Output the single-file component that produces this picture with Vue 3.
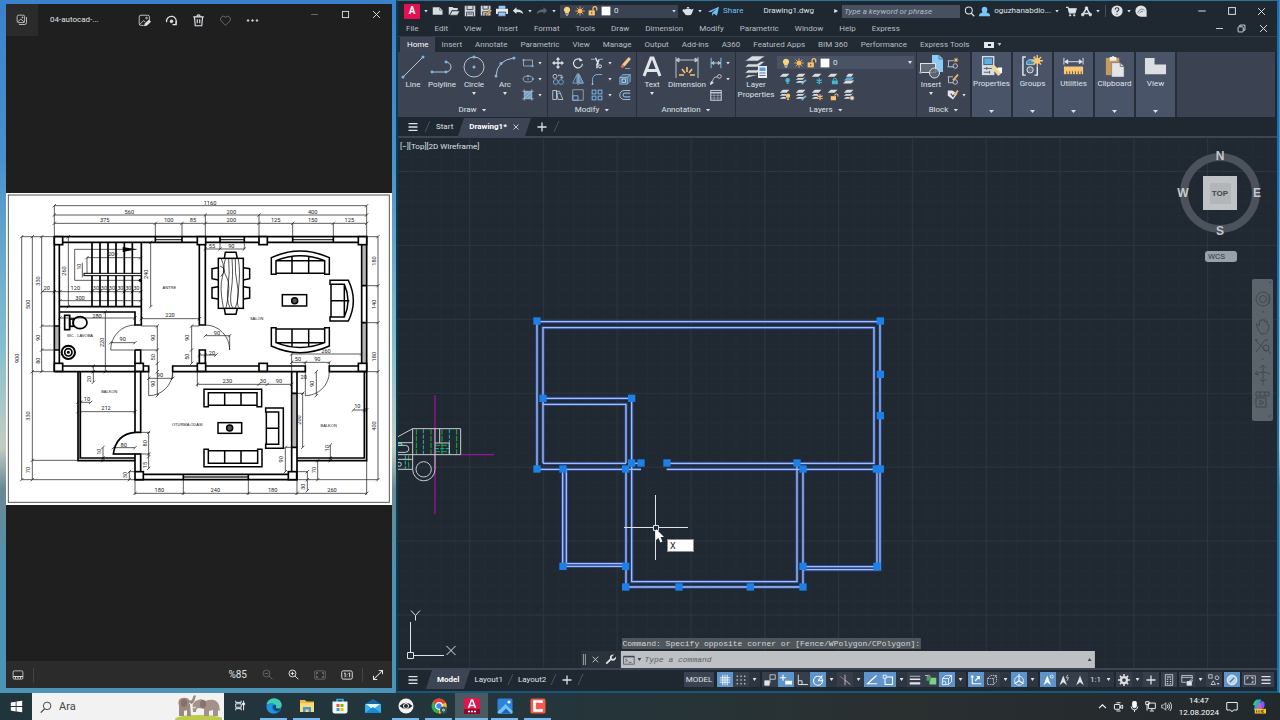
<script setup>
import { h, ref } from 'vue'

const icons = {
  gallery: '<rect x="1.5" y="1.5" width="10" height="10" rx="2"/><path d="M4 14h7.500a2.500 2.500 0 0 0 2.500-2.500V4"/><path d="M2.500 10.500l4-4 4.500 4.500"/><circle cx="8.700" cy="4.500" r=".7"/>',
  editpic: '<path d="M14 8v-4.500a2 2 0 0 0-2-2H3.500a2 2 0 0 0-2 2V12a2 2 0 0 0 2 2H7"/><path d="M2 13l5-5 2 2"/><circle cx="10.500" cy="5" r="1"/><path d="M8 14.500l1-3 4.500-4 2 2-4.500 4.300z" fill="currentColor"/>',
  rotpic: '<path d="M2 10a6 6 0 1 1 11 2" stroke-width="1.500"/><path d="M13.800 8.500v4.500h-4.500" stroke-width="1.500"/><circle cx="8" cy="9" r="1.700" fill="currentColor"/>',
  trash: '<path d="M1.500 3.500h13M3 3.500l1 11h8l1-11M6 3a2 2 0 0 1 4 0M6.500 6.500v5M9.500 6.500v5" stroke-width="1.400"/>',
  heart: '<path d="M8 14L2.500 8.300a3.500 3.500 0 0 1 5.500-4.300 3.500 3.500 0 0 1 5.500 4.300z"/>',
  dots: '<g fill="currentColor"><circle cx="2.500" cy="8" r="1"/><circle cx="8" cy="8" r="1"/><circle cx="13.500" cy="8" r="1"/></g>',
  min: '<path d="M3 8h10" stroke-width="1.300"/>',
  max: '<rect x="3.500" y="3.500" width="9" height="9" stroke-width="1.300"/>',
  restore: '<rect x="3" y="5.500" width="7.500" height="7.500" rx="1" stroke-width="1.300"/><path d="M5.500 5V3h7.500v7.500h-2" stroke-width="1.300"/>',
  close: '<path d="M3 3l10 10M13 3L3 13" stroke-width="1.400"/>',
  film: '<rect x="1.500" y="2.500" width="13" height="11" rx="1.500"/><path d="M1.500 10h13M4.500 10v3M8 10v3M11.500 10v3" stroke-width="1.300"/>',
  zoomout: '<circle cx="6.500" cy="6.500" r="5"/><path d="M10 10l5 5M4 6.500h5" stroke-width="1.200"/>',
  zoomin: '<circle cx="6.500" cy="6.500" r="5" stroke-width="1.400"/><path d="M10 10l5 5M4 6.500h5M6.500 4v5" stroke-width="1.400"/>',
  fit: '<rect x="1" y="2.500" width="14" height="11" rx="1"/><path d="M3.500 7V5h2M12.500 7V5h-2M3.500 9v2h2M12.500 9v2h-2" stroke-width="1.600"/>',
  one: '<rect x="1" y="2.500" width="14" height="11" rx="2" stroke-width="1.300"/><path d="M4 6l1.500-.8V11M10 6l1.500-.8V11M8 6.500v1M8 9v1" stroke-width="1.300"/>',
  full: '<path d="M2 14L14 2M9 2h5v5M7 14H2V9" stroke-width="1.400"/>',
  newf: '<path d="M1 3h9l4 4v6H1z" fill="#d8dbe0" stroke="none"/><path d="M10 3v4h4" stroke="#6d737d"/>',
  open: '<path d="M1 13V2.500h5l1.500 1.500H13v3H5l-3 6z" fill="#d8dbe0" stroke="none"/><path d="M5.500 8H15.500l-3 5.500H2.500z" fill="#d8dbe0" stroke="#1f2730" stroke-width=".6"/>',
  save: '<path d="M1 1h14v14H1z" fill="#d0d4da" stroke="none"/><path d="M4 1v5h8V1M3.500 15V9.500h9V15M5 12h6" stroke="#48505c" stroke-width="1.300"/>',
  saveas: '<path d="M1 1h13v13H1z" fill="#d0d4da" stroke="none"/><path d="M4 1v4.500h7V1M3.500 14V9h8M5 12h4" stroke="#48505c" stroke-width="1.300"/><path d="M7 15l1-3.500 6-6 2 2-6 6z" fill="#f0a94c" stroke="#1f2730" stroke-width=".6"/>',
  print: '<path d="M3.500 1h9v4h-9z" fill="#8fcbff" stroke="none"/><path d="M0 5h16v7H0z" fill="#e6e8eb" stroke="none"/><path d="M3 9.500h10V15H3z" fill="#8fcbff" stroke="#39404a"/>',
  undo: '<path d="M1 7.500L6 3v3q8-.5 9 6-3.500-3-9-2.500V12z" fill="#dde0e4" stroke="none"/>',
  redo: '<path d="M15 7.500L10 3v3q-8-.5-9 6 3.500-3 9-2.500V12z" fill="#5c6470" stroke="none"/>',
  bulb: '<path d="M8 1a5 5 0 0 0-3 9v2h6v-2a5 5 0 0 0-3-9z" fill="#fbd27d" stroke="none"/><path d="M5.500 13.500h5M6.500 15.300h3" stroke="#e1e3e6"/>',
  sun: '<circle cx="8" cy="8" r="4" fill="#fdb958" stroke="none"/><path d="M8 .5v3M8 12.500v3M.5 8h3M12.500 8h3M2.700 2.700l2 2M11.300 11.300l2 2M2.700 13.300l2-2M11.300 4.700l2-2" stroke="#fbc46f" stroke-width="1.300"/>',
  lock: '<path d="M1 7h10v8H1z" fill="#fbc46f" stroke="none"/><path d="M8 7V4a3 3 0 0 1 6 0v3" stroke="#fbc46f" stroke-width="2"/><path d="M6 9.500v3" stroke="#59461f" stroke-width="1.500"/>',
  sq: '<rect x="1" y="1" width="14" height="14" fill="#fff" stroke="none"/>',
  tea: '<path d="M3.500 6q5-3 9 0l3-1-2.500 6.500q-1 2-4 2H7q-3 0-4-3L.5 7.500 1.500 5.500z" fill="#dcdfe3" stroke="none"/><path d="M6.500 3.500h3" stroke="#dcdfe3" stroke-width="1.500"/>',
  plane: '<path d="M0 8L16 1l-3 13-4.500-3L6 14.500V9.700L13 4 4 9.200z" fill="#6cc0f5" stroke="none"/>',
  mag: '<circle cx="7" cy="6.500" r="5" stroke-width="1.500"/><path d="M10.500 10.500L15 15" stroke-width="1.800"/>',
  magl: '<circle cx="9.500" cy="6.500" r="5" stroke-width="1.200"/><path d="M6 10.500L1 15.500" stroke-width="1.400"/>',
  person: '<path d="M0 15v-2q0-2 5-3.500Q3.500 7 4 4q.5-3 4-3t4 3q.5 3-1 5.500 5 1.500 5 3.500v2z" fill="#78c3f7" stroke="none"/>',
  cart: '<path d="M0 2h3l2 8h8l2-6H4" fill="none" stroke-width="1.500"/><path d="M4 4.500h10l-1 5H5z" fill="currentColor"/><circle cx="6" cy="13.500" r="1.200" fill="currentColor"/><circle cx="12" cy="13.500" r="1.200" fill="currentColor"/>',
  adsk: '<path d="M2.500 12.500L8 3l5.500 9.500M5 11h6" stroke-width="2.200"/><g fill="currentColor"><circle cx="8" cy="3" r="2"/><circle cx="2.500" cy="12.500" r="2"/><circle cx="13.500" cy="12.500" r="2"/></g>',
  help: '<circle cx="8" cy="8" r="7.500" fill="#dfe2e6" stroke="none"/><path d="M5.500 6.200q0-2.500 2.500-2.500t2.500 2.200q0 1.500-2.500 2.600v1.300M8 11.500v1.500" stroke="#333b46" stroke-width="1.500"/>',
  assist: '<path d="M8 .5a7.500 7.500 0 0 1 7.500 7.500v7.500H8a7.500 7.500 0 0 1 0-15z" fill="#dfe2e6" stroke="none"/><path d="M3.500 10.500q2-4.500 5-5t4 2M6 11q1.500-3 4.500-2.500" stroke="#59616c"/>',
  line: '<path d="M2 22L22 2" /><g fill="#79b9ea" stroke="none"><circle cx="2" cy="22" r="1.500"/><circle cx="22" cy="2" r="1.500"/></g>',
  pline: '<path d="M2 17h14a5 5 0 0 0 0-10"/><g fill="#79b9ea" stroke="none"><circle cx="2" cy="17" r="1.400"/><circle cx="16" cy="17" r="1.400"/><circle cx="16" cy="7" r="1.400"/></g>',
  circle: '<circle cx="12" cy="12" r="10"/><g fill="#79b9ea" stroke="none"><circle cx="12" cy="2" r="1.500"/><circle cx="12" cy="12" r="1.500"/></g>',
  arc: '<path d="M3 21Q4 5 21 3"/><g fill="#79b9ea" stroke="none"><circle cx="3" cy="21" r="1.500"/><circle cx="8" cy="8.500" r="1.500"/><circle cx="21" cy="3" r="1.500"/></g>',
  rect: '<path d="M2 4h12v8H2z"/><g fill="#79b9ea" stroke="none"><circle cx="2" cy="4" r="1.500"/><circle cx="14" cy="12" r="1.500"/></g>',
  ellipse: '<ellipse cx="8" cy="8" rx="6.500" ry="4"/><g fill="#79b9ea" stroke="none"><circle cx="8" cy="8" r="1"/><circle cx="14.500" cy="8" r="1.400"/><circle cx="8" cy="4" r="1.400"/></g>',
  hatch: '<rect x="3" y="3" width="10" height="10" fill="#6c9fc4" stroke="none"/><path d="M3 .5v15M13 .5v15M.5 3h15M.5 13h15M3 8l5-5M3 13L13 3M8 13l5-5"/>',
  move: '<path d="M8 2v12M2 8h12" stroke-width="1.700"/><path d="M8 0l3 3.500H5zM8 16l3-3.500H5zM0 8l3.500-3v6zM16 8l-3.500-3v6z" fill="currentColor" stroke="none"/>',
  rotate: '<path d="M12.500 4.500A6 6 0 1 0 14 9" stroke-width="1.500"/><path d="M9.500 1l.5 5 4.500-1.500z" fill="currentColor" stroke="none"/>',
  trim: '<path d="M0 3h5M12 3h4" stroke="#79b9ea" stroke-width="1.400"/><path d="M6 1l4 9M11 3L8 10" stroke-width="2"/><circle cx="12" cy="12.500" r="2" stroke-width="1.300"/><path d="M8 9v6" stroke-width="2"/>',
  erase: '<path d="M4 10L13 0l3 2.500-8.500 10z" fill="#f5c789" stroke="none"/><path d="M4 10l3.500 2.500-3 2.500-2.500-2z" fill="#e46a5e" stroke="none"/><path d="M8 15.500h7" stroke="#a9d3f2"/>',
  copy: '<circle cx="4" cy="4.500" r="2.700"/><circle cx="5" cy="12" r="3.200" stroke="#79b9ea"/><circle cx="12" cy="12" r="3.200" stroke="#79b9ea"/><path d="M8 3h5v3.500M11 5l2 2.500L15 5"/>',
  mirror: '<path d="M6.500 2v11.500H1zM9.500 2v11.500H15z" stroke="#79b9ea"/><path d="M9.500 2v11.500H15z" fill="#527da2" stroke="#79b9ea"/><path d="M8 0v16"/>',
  fillet: '<path d="M2 15V9q0-6 6-7h7" stroke="#79b9ea" stroke-width="1.200"/><circle cx="2" cy="15" r=".8"/>',
  explode: '<path d="M1 6l4-4h10v9l-4 4H1z" fill="#4c6d8c" stroke="#79b9ea"/><path d="M1 6h10v9M11 6l4-4" stroke="#a9cbe6"/><rect x="4" y="8" width="4.500" height="4.500"/>',
  stretch: '<path d="M1 2h5v12H1zM6 3l4 0 4.500 11H8z"/><path d="M6 6h5" stroke="#79b9ea"/>',
  scale: '<path d="M1 1h14v14H1z" stroke="#a9b6c4"/><path d="M1 9h7v6H1z" stroke="#79b9ea" stroke-width="1.300"/>',
  array: '<g stroke="#79b9ea" stroke-width="1.300"><rect x="1.500" y="1.500" width="5" height="5"/><rect x="9.500" y="1.500" width="5" height="5"/><rect x="1.500" y="9.500" width="5" height="5"/><rect x="9.500" y="9.500" width="5" height="5"/></g>',
  offset: '<path d="M15 2H7a6 6 0 0 0 0 12h8"/><path d="M15 5.500H8a2.500 2.500 0 0 0 0 5h7" stroke="#79b9ea" stroke-width="1.500"/>',
  text: '<path d="M4 21L11 3h2l7 18M7 15.500h10" stroke="#e2e5e8" stroke-width="3"/>',
  dim: '<path d="M1 2v21M23 2v21"/><path d="M1 5h22M1 5l3-2v4zM23 5l-3-2v4z" fill="currentColor"/><path d="M12 12v5M7 14l3 4M17 14l-3 4M4 20h5M20 20h-5" stroke="#fbc46f" stroke-width="1.600"/>',
  dimlin: '<path d="M1.500 1v14M14.500 1v14" stroke="#79b9ea" stroke-width="1.400"/><path d="M2 8h12M2 8l3-2v4zM14 8l-3-2v4z"/>',
  leader: '<circle cx="12.500" cy="4.500" r="2.500"/><path d="M10 5Q5 4.500 4 9l-2.500 5"/><path d="M.5 15.500l1-4 3 1.500z" fill="currentColor"/>',
  table: '<rect x="1" y="2" width="14" height="13" stroke-width="1.500"/><path d="M1 5h14" stroke-width="2"/><path d="M5.500 5v10M10.500 5v10M1 8.500h14M1 12h14" stroke-width=".7"/>',
  layprop: '<path d="M1 6l7-5h13l-7 5zM1 12l3-3h9l4-2.500 4 0-7 5.500zM1 18l3-3h9l4-2.500h3l-7 5.500zM1 23l3-3h9" fill="#dadde1" stroke="#4a5160" stroke-width=".6"/><rect x="14" y="11" width="9" height="12" fill="#ebedf0" stroke="none"/><rect x="15.500" y="12.500" width="6" height="3.500" fill="#4fa4df" stroke="none"/><path d="M15.500 18h6M15.500 20.500h6" stroke="#6b7280"/>',
  lay1: '<path d="M1 5l4-4h9L10 5z" fill="#dadde1" stroke="none"/><circle cx="11.500" cy="9.500" r="3" fill="#45b8c9" stroke="none"/><path d="M10 13.500h3" stroke="#45b8c9" stroke-width="2"/>',
  lay2: '<path d="M1 5l4-4h9l-4 4zM1 9l3-2.500h7l3-2-4 4.500zM1 13l3-2.500h7l3-2-4 4.500z" fill="#dadde1" stroke="none"/><path d="M9 15l6-6" stroke="#79c3ec" stroke-width="1.500"/>',
  lay3: '<path d="M1 5l4-4h9l-4 4z" fill="#dadde1" stroke="none"/><path d="M11 7v8M7.500 9l7 4M7.500 13l7-4" stroke="#45b8c9" stroke-width="1.800"/>',
  lay4: '<path d="M1 5l4-4h9l-4 4z" fill="#dadde1" stroke="none"/><path d="M6.500 10h8v5h-8z" fill="#45b8c9" stroke="none"/><path d="M8.500 10V8q2-2.500 4 0v2" stroke="#45b8c9" stroke-width="1.300"/>',
  lay5: '<path d="M0 14l4-4h11l-4 4z" fill="#dadde1" stroke="none"/><path d="M1 10l4-4h10l-4 4z" fill="#62a7d8" stroke="none"/><path d="M4 5l3-4h7l-3 4z" fill="#dadde1" stroke="none"/>',
  lay6: '<path d="M1 5l4-4h9l-4 4zM1 9l3-2.500h5l1 2.500zM1 13l3-2.500h5V13z" fill="#dadde1" stroke="none"/><circle cx="12" cy="9" r="3" fill="#fbc46f" stroke="none"/><path d="M10.500 13.500h3" stroke="#fbc46f" stroke-width="2"/>',
  lay7: '<path d="M1 5l4-4h9l-4 4zM1 9l3-2.500h5l1 2.500zM1 13l3-2.500h5V13z" fill="#dadde1" stroke="none"/><path d="M12 7v8M8.500 9l7 4M8.500 13l7-4" stroke="#fbc46f" stroke-width="1.500"/>',
  lay8: '<path d="M1 5l4-4h9l-4 4z" fill="#dadde1" stroke="none"/><path d="M5 9.500h7V15H5z" fill="#fbc46f" stroke="none"/><path d="M10.500 9V7.500q2-2 4 0V10" stroke="#fbc46f" stroke-width="1.300"/>',
  lay9: '<path d="M1 5l4-4h9l-4 4zM1 9l3-2.500h7l3-2-4 4.500zM1 13l3-2.500h7l0 2.500z" fill="#dadde1" stroke="none"/><circle cx="12" cy="12" r="3" fill="#e8dcc0" stroke="#6b5f45"/>',
  insert: '<path d="M13 0h7l4 4v13H13z" fill="#8ccbf7" stroke="none"/><path d="M20 0v4h4" stroke="#4a7ba0"/><rect x="1.500" y="8.500" width="15" height="9" fill="#646a76"/><circle cx="15.500" cy="18" r="5" fill="#646a76" fill-opacity=".8"/><circle cx="1.500" cy="17.500" r="1.200" fill="#79b9ea" stroke="none"/>',
  blk1: '<path d="M1 5h8M2 5v8h7"/><circle cx="11" cy="12" r="3"/><path d="M0 13h8" stroke="#79b9ea"/><path d="M12 1v6M9 4h6M10 2l4 4M14 2l-4 4" stroke="#fbc46f" stroke-width="1.200"/>',
  blk2: '<path d="M1 5h7M2 5v8h6"/><circle cx="11" cy="12" r="3"/><path d="M7 9l7-8 1.500 2-6 7z" fill="#f5b467" stroke="none"/>',
  blk3: '<path d="M1 2h6l7 4-6 8-7-5z" fill="#e2e4e8" stroke="none"/><path d="M5 6l3 4 6-9" stroke="#3d4454" stroke-width="1.600"/><path d="M9 7l5-6 1.500 2-5 6z" fill="#f5b467" stroke="none"/>',
  props: '<rect x="2" y="1" width="13" height="20" fill="#d9dce0" stroke="none"/><rect x="4" y="3" width="9" height="7" fill="#64aedf" stroke="#35607f"/><path d="M4 14h9M4 18h6M7 12.500v3M10 16.500v3" stroke="#555c68"/><path d="M12 13l8 8 3-3-8-7z" fill="#f3d49b" stroke="none"/><path d="M15 17l4-4 4 0v6z" fill="#fff" stroke="none"/><path d="M11 12l3-2 8 9-3 3z" fill="#f3d49b" stroke="none"/>',
  groups: '<path d="M5 2H2v19h3M14 2h1M14 21h3v-9" stroke="#e4e7ea" stroke-width="1.500"/><path d="M6 7l2-2h6v5H6z" fill="#4f8dbb" stroke="#9cd1f5"/><circle cx="9.500" cy="15.500" r="3.300" fill="#6a717e"/><path d="M17 0v12M11 6h12M13 2l8 8M21 2l-8 8" stroke="#fbc46f" stroke-width="1.400"/><circle cx="17" cy="6" r="3" fill="#fbc46f" stroke="none"/>',
  utils: '<path d="M2 3v7M22 3v7M3 7h18M3 7l3-2v4zM21 7l-3-2v4z" fill="currentColor"/><rect x="2" y="12" width="20" height="8" fill="#f8c878" stroke="none"/><path d="M5 20v-3M8 20v-3M11 20v-3M14 20v-3M17 20v-3M20 20v-3" stroke="#6a522a"/>',
  clip: '<path d="M3 3h14v18H3z" fill="#c99a5b" stroke="none"/><path d="M7 2h2a2 2 0 0 1 3 0h2v4H7z" fill="#eceef0" stroke="none"/><path d="M9 8h9l4 4v11H9z" fill="#e3e5e8" stroke="#555d6a" stroke-width=".5"/><path d="M18 8v4h4" stroke="#777"/>',
  viewi: '<path d="M1 3h10v7h12v10H1z" fill="#dcdfe2" stroke="none"/>',
  burger: '<path d="M2 3.500h12M2 8h12M2 12.500h12" stroke-width="1.700"/>',
  plus: '<path d="M8 2v12M2 8h12" stroke-width="1.700"/>',
  wrench: '<path d="M2 14l7-7" stroke-width="2.800"/><path d="M13 1l-3 3v3h3l3-3a4.500 4.500 0 1 1-3-3" fill="currentColor" stroke="none"/>',
  prompt: '<rect x="1" y="3" width="14" height="10.500"/><path d="M1 3.500h14" stroke-width="2"/><path d="M3 6.500l3 2-3 2M7.500 11h4"/>',
  grid: '<path d="M5 1v14M11 1v14M1 5h14M1 11h14M8 1v14M1 8h14" stroke-width="1.100"/>',
  snap: '<g fill="currentColor" stroke="none"><circle cx="3" cy="3" r="1"/><circle cx="8" cy="3" r="1"/><circle cx="13" cy="3" r="1"/><circle cx="3" cy="8" r="1"/><circle cx="8" cy="8" r="1"/><circle cx="13" cy="8" r="1"/><circle cx="3" cy="13" r="1"/><circle cx="8" cy="13" r="1"/><circle cx="13" cy="13" r="1"/></g>',
  infer: '<path d="M1 9h6v6H1z" fill="currentColor"/><path d="M8 1h7v6H8zM8 7v5"/>',
  dyn: '<path d="M4 1v8M0 5h8" stroke-width="1.500"/><path d="M7 9h9v5H7z" fill="currentColor" stroke="none"/>',
  ortho: '<path d="M3 1v13h13M3 9h5v5" stroke-width="1.300"/>',
  polar: '<circle cx="8" cy="9" r="6" stroke-width="1.500"/><path d="M8 9h7M8 9l6-7" stroke-width="1.500"/>',
  iso: '<path d="M8 1v14M8 8l7 6"/><path d="M1 3l7 5" stroke="#d3766c"/>',
  track: '<path d="M14 2L2 13h13" stroke-width="1.500"/>',
  osnap: '<rect x="4" y="4" width="10" height="10" stroke-width="1.400"/><rect x="1.500" y="1.500" width="4" height="4" fill="#5f94cb"/>',
  lw: '<path d="M1 3h14" /><path d="M1 7h14" stroke-width="2"/><path d="M1 12.500h14" stroke-width="3"/>',
  transp: '<rect x="6" y="5" width="9" height="9" fill="#7ad08d" stroke="none"/><path d="M0 2h4v4M5 1l2 4" /><rect x="2" y="3" width="6" height="6" fill="#4f9a62" stroke="none"/>',
  cube: '<path d="M2 6l4-4h8v8l-4 4H2zM2 6h8v8M10 6l4-4"/><circle cx="4" cy="12" r="2.500" fill="#5f94cb"/>',
  ucs: '<path d="M3 2v11h12M3 2L1.500 4.500M3 2l1.500 2.500M7 9l5-5M9 3.500h3.500V7" stroke-width="1.500"/>',
  dcube: '<path d="M2 6l4-4h8v8l-4 4H2zM2 6h8v8M10 6l4-4" stroke-dasharray="2 1"/>',
  gizmo: '<circle cx="8" cy="9" r="6"/><path d="M8 0v9M8 9l-6 4M8 9l6 4" stroke-width="1.400"/>',
  ann: '<path d="M7 2l5 13-5-4-5 4zM4 10h6" fill="currentColor" stroke="none"/><circle cx="13" cy="3.500" r="2"/>',
  ann2: '<path d="M7 2l5 13-5-4-5 4z" fill="currentColor" stroke="none"/><path d="M13 1l-2 4h3l-2 4"/>',
  ann3: '<path d="M8 2l5 13-5-4-5 4z" fill="currentColor" stroke="none"/>',
  gear: '<circle cx="8" cy="8" r="4" stroke-width="3"/><path d="M8 0v3M8 13v3M0 8h3M13 8h3M2.500 2.500l2 2M11.500 11.500l2 2M2.500 13.500l2-2M11.500 4.500l2-2" stroke-width="2"/>',
  calc: '<rect x="3" y="1" width="10" height="14"/><path d="M5 4h6M5 7h2M9 7h2M5 10h2M9 10h2M5 13h2M9 13h2" stroke-width="1.300"/>',
  uilock: '<path d="M7 11H1V2h14v5M1 4.500h14"/><path d="M8 10h6v5H8z" fill="currentColor"/><path d="M12 10V8h3v2"/>',
  iso2: '<rect x="1" y="1" width="4.500" height="4.500"/><path d="M4 14l3-5 3 5z"/><circle cx="12" cy="5" r="2.500"/><path d="M12 13h3" stroke-width="1.500"/>',
  perf: '<circle cx="8" cy="8" r="6.500" fill="#b9d4ef"/><path d="M5 11l6-6" stroke="#44719f" stroke-width="1.500"/>',
  clean: '<rect x="1" y="2.500" width="14" height="11"/><path d="M4 7V5h2M12 9v2h-2M9.500 5H12v2" stroke-width="1.300"/>',
  win: '<path d="M1 3l6-1v5.500H1zM8 1.800L15 1v6.500H8zM1 8.500h6V14l-6-1zM8 8.500h7V15l-7-.8z" fill="#fff" stroke="none"/>',
  taskview: '<path d="M1 1v2.500h8V1M1 15v-2.500h8V15M1 5.500h8v5H1zM12.500 1v14" stroke-width="1.300"/><path d="M11 4.500h3v2.500h-3z" fill="currentColor"/>',
  edge: '<circle cx="8" cy="8" r="7.700" fill="#1474c4" stroke="none"/><path d="M.6 6.500C2-1.500 15-1.500 15.700 7c0 4-5 4-6 2.500C11 7 8 4 .6 6.500z" fill="#43cdb0" stroke="none"/><path d="M6 9c0-2 2-2.500 3.500-2C7 4.500 1 5 .5 9c1 7 8 8 12 4.500-4 1-6.500-1.500-6.500-4.500z" fill="#2193df" stroke="none"/><path d="M7 8.500q1-2 2.700-1.200 1 1 0 2.200 1.500 2 5 1l-2 2.500Q7.500 13.500 7 8.500z" fill="#14496f" stroke="none"/>',
  folder: '<path d="M1 2h5l1.500 1.500H15V14H1z" fill="#f0b940" stroke="none"/><path d="M1 5h14v9H1z" fill="#ffdb74" stroke="none"/><path d="M4 14V9h8v5h-2.500v-2.500h-3V14z" fill="#4298d6" stroke="none"/>',
  store: '<path d="M5 4V1.500h6V4" stroke="#39b1e8" stroke-width="1.500"/><path d="M.5 3.500h15V13a2.500 2.500 0 0 1-2.500 2.500H3A2.500 2.500 0 0 1 .5 13z" fill="#f3f6f8" stroke="none"/><path d="M4.500 6h3v3h-3z" fill="#e8552f" stroke="none"/><path d="M8.500 6h3v3h-3z" fill="#7fba00" stroke="none"/><path d="M4.500 10h3v3h-3z" fill="#2aa4e8" stroke="none"/><path d="M8.500 10h3v3h-3z" fill="#ffb900" stroke="none"/>',
  mail: '<path d="M0 6l8-5 8 5z" fill="#1567a8" stroke="none"/><path d="M0 6h16v9H0z" fill="#36b0ee" stroke="none"/><path d="M1 6h14l-7 5.500z" fill="#e6f4fc" stroke="none"/><path d="M0 15l8-6 8 6z" fill="#1c87d4" stroke="none"/>',
  eye: '<circle cx="8" cy="8" r="7.500" fill="#f4f4f4" stroke="none"/><path d="M1.500 8Q8 1.500 14.500 8 8 14.500 1.500 8z" fill="#262b30" stroke="none"/><circle cx="8" cy="8" r="2.500" fill="#262b30" stroke="#f4f4f4"/>',
  chrome: '<circle cx="8" cy="8" r="7.500" fill="#35a853" stroke="none"/><path d="M8 8L1.500 4.200A7.500 7.500 0 0 1 14.800 5z" fill="#e64235" stroke="none"/><path d="M8 8l6.800-3.500A7.500 7.500 0 0 1 8 15.500z" fill="#fbc116" stroke="none"/><circle cx="8" cy="8" r="3.300" fill="#4386f4" stroke="#fff" stroke-width="1.200"/><circle cx="12.500" cy="12" r="3.500" fill="#36525c" stroke="none"/><circle cx="12.500" cy="12" r="1" stroke="#d6dee1"/>',
  acad: '<path d="M0 0h14l2 2v14H0z" fill="#e0144f" stroke="none"/><path d="M0 11h16v5H0z" fill="#8e0b30" stroke="none"/><path d="M4.500 10L7.500 2h1l3 8M5.800 7.500h4.500" stroke="#fff" stroke-width="1.600"/><path d="M4 13.500h2M7 13.500h2M10 13.500h2" stroke="#fff" stroke-width="1.300"/>',
  photos: '<rect x=".5" y=".5" width="15" height="15" rx="1.500" fill="#2b83dc" stroke="none"/><path d="M.5 14l8-8 7 7v2.500H2q-1.500 0-1.500-1.500z" fill="#6fc3fb" stroke="none"/><path d="M4 15.500l5-5 5 5z" fill="#1763b5" stroke="none"/><circle cx="12" cy="4" r="1.600" fill="#eef7ff" stroke="none"/>',
  cam: '<rect x=".5" y=".5" width="15" height="15" rx="1.500" fill="#f25b48" stroke="none"/><path d="M11.500 5V3.500h-7v9h7V11" stroke="#fff" stroke-width="2.600"/>',
  chev: '<path d="M3 10.500l5-5 5 5" stroke-width="1.500"/>',
  meet: '<rect x="2" y="5" width="8" height="7" rx="1" stroke-width="1.400"/><path d="M10 8l4-2v5l-4-2M5 2.500h6M5 14.500h6" stroke-width="1.300"/>',
  mic: '<rect x="5" y="0" width="6" height="10" rx="3" fill="currentColor"/><path d="M3 8q1 5 5 5t5-5M8 13v3" stroke-width="1.300"/>',
  net: '<path d="M5 3h10v8H5zM10 11v3M7 14.500h6" stroke-width="1.300"/><path d="M1 1h5v4H1zM3 5v9" stroke-width="1.300"/>',
  vol: '<path d="M1 6h2.500L7 2.500v11L3.500 10H1z"/><path d="M9 5.500q2 2.500 0 5M11 3.500q3.500 4.500 0 9M13 1.500q5 6.500 0 13" stroke-width="1.200"/>',
  chat: '<path d="M1 2h14v10H10l-2 2.500L6 12H1z" stroke-width="1.200"/>',
  copilot: '<path d="M3 12L5 2q.5-1.500 2-1.500h4L8.500 9q-.5 2-2.500 2z" fill="#25a8e0" stroke="none"/><path d="M13 4l-2 9q-.5 1.500-2 1.500H5L7.500 6q.5-2 2.500-2z" fill="#d95bb5" stroke="none"/><path d="M2 6l2-4 3-1.500-2 7z" fill="#3cc56f" stroke="none"/><path d="M11 2q4 0 3.500 4l-1 4h-3z" fill="#7b5cf0" stroke="none"/><path d="M4 10.500h12v5H4z" fill="#f7c331" stroke="none"/><path d="M6 12v2.500M8.500 12v2.500M11 12v2.500M13.500 12h-1v2.500h1" stroke="#594100"/>',
}

const Icon = (p) =>
  h('svg', {
    viewBox: `0 0 ${p.box || 16} ${p.box || 16}`,
    width: p.size || 12,
    height: p.size || 12,
    fill: 'none',
    stroke: 'currentColor',
    'stroke-width': 1,
    'aria-hidden': 'true',
    innerHTML: icons[p.name],
  })
Icon.props = ['name', 'size', 'box']

const command = ref('')
const dynamicInput = ref('X')
const keyword = ref('')
const taskSearch = ref('')

const menus = ['File', 'Edit', 'View', 'Insert', 'Format', 'Tools', 'Draw', 'Dimension', 'Modify', 'Parametric', 'Window', 'Help', 'Express']
const tabs = ['Home', 'Insert', 'Annotate', 'Parametric', 'View', 'Manage', 'Output', 'Add-ins', 'A360', 'Featured Apps', 'BIM 360', 'Performance', 'Express Tools']
const fileTools = ['newf', 'open', 'save', 'saveas', 'print']
const drawTools = [
  { name: 'line', label: 'Line', cls: 'w28' },
  { name: 'pline', label: 'Polyline', cls: 'w30' },
  { name: 'circle', label: 'Circle', cls: 'w34', more: true },
  { name: 'arc', label: 'Arc', cls: 'w28', more: true },
]
const modifyTools = ['move', 'rotate', 'trim', '>', 'erase', 'copy', 'mirror', 'fillet', '>', 'explode', 'stretch', 'scale', 'array', '>', 'offset']
const layerTools = [
  ['lay1', 'lay2', 'lay3', 'lay4', 'lay5'],
  ['lay6', 'lay2', 'lay7', 'lay8', 'lay9'],
]
const collapsed = [
  { name: 'props', label: 'Properties' },
  { name: 'groups', label: 'Groups' },
  { name: 'utils', label: 'Utilities' },
  { name: 'clip', label: 'Clipboard' },
  { name: 'viewi', label: 'View' },
]
const status = [
  'grid*', 'snap', '>', '|', 'infer', 'dyn*', 'ortho', 'polar*', '>', 'iso', '>', 'track*', 'osnap*', '>', 'lw', 'transp', 'cube*', '>', '|',
  'ucs*', 'dcube', '>', 'gizmo*', '>', '|', 'ann*', 'ann2', 'ann3', '1:1', '>', '|', 'gear', '>', 'plus', '|', 'calc', '|', 'uilock', '>', 'iso2', '|', 'perf*', '|', 'clean', 'burger',
]
const apps = [
  { name: 'taskview', size: 11 },
  { name: 'edge', run: true },
  { name: 'folder', run: true },
  { name: 'store' },
  { name: 'mail' },
  { name: 'eye', run: true },
  { name: 'chrome', run: true },
  { name: 'acad', run: true, active: true },
  { name: 'photos', run: true },
  { name: 'cam', run: true },
]

const walls =
  'M423 65H1452V809H1221M441 490V83H1434V490H812M423 65V508H735M441 490H690M707 490H735M812 508H1452' +
  'M441 295H707V845H1203V490M441 313H690V490M690 508V861H1221V508M500 508V799H690M511 508V791H690M1221 800H1443V508'
const grips = [
  [423, 63], [1453, 63], [1453, 223], [1453, 347], [441, 295], [707, 295], [423, 507], [501, 507], [689, 507], [707, 489], [735, 489], [813, 489],
  [1203, 489], [1221, 507], [1441, 507], [1453, 507], [501, 799], [689, 799], [1221, 799], [1443, 799], [689, 861], [849, 861], [1063, 861], [1221, 861],
]

// Horizontal dimension chains: [y, stops along x]
const hDims = [
  [47, [163, 1100]], [75, [163, 616, 777, 1100]], [100, [163, 466, 546, 616, 777, 878, 1000, 1100]], [177, [616, 660, 733]],
  [305, [127, 163, 180, 276, 300, 324, 348, 373, 397, 422]], [332, [180, 422]], [384, [180, 405]], [386, [424, 598]], [437, [616, 689]],
  [458, [332, 405]], [492, [875, 1085]], [517, [875, 916, 988]], [565, [446, 518]], [583, [592, 777, 802, 875]], [665, [234, 405]],
  [773, [340, 405]], [910, [405, 550, 745, 891, 1100]], [203, [261, 422]], [637, [234, 242, 272]], [660, [1060, 1093, 1100]], [495, [598, 616, 648]],
]
// Vertical dimension chains: [x, stops along y]
const vDims = [
  [65, [140, 869]], [97, [140, 545, 811, 869]], [125, [140, 408, 480, 545]], [205, [140, 350]], [452, [157, 350]], [316, [366, 545]],
  [472, [408, 480, 520, 545, 617]], [575, [408, 480, 520]], [1134, [140, 287, 398, 545, 869]], [280, [528, 545, 577]], [446, [727, 792, 800, 835]],
  [309, [772, 804, 812]], [388, [845, 869]], [949, [545, 617]], [908, [610, 772]], [856, [772, 845]], [953, [812, 869]], [922, [845, 869, 902]], [991, [765, 804, 812]],
]
const hPath = hDims.map(([y, s]) => `M${s[0]} ${y}H${s[s.length - 1]}` + s.map((x) => `M${x - 5} ${y + 5}l10-10`).join('')).join('')
const vPath = vDims.map(([x, s]) => `M${x} ${s[0]}V${s[s.length - 1]}` + s.map((y) => `M${x - 5} ${y + 5}l10-10`).join('')).join('')
const extensions =
  'M163 47V140M466 100V140M546 100V140M616 75V140M777 75V140M878 100V140M1000 100V140M1100 47V140M65 140H163M125 408H163M125 480H163M97 545H163' +
  'M97 811H235M65 869H405M1100 140H1134M1100 287H1134M1100 398H1134M1100 545H1134M891 869H1134M660 157V177M733 157V177M424 408H472M575 408H598' +
  'M332 480H472M405 869V914M550 869V914M745 869V914M891 869V914M1100 812V914M875 492V545M875 583V610M592 545V590M446 545V617M916 517V617M340 792H450M405 727H450' +
  'M224 178H410M224 178V271H424M247 218V262M261 203V257M875 610H912M875 772H856M405 845H388M891 845H922'
const hLabels = [
  ['1160', 630, 38], ['560', 388, 66], ['200', 694, 66], ['400', 938, 66], ['375', 314, 90], ['100', 506, 90], ['85', 579, 90], ['200', 694, 90],
  ['125', 827, 90], ['150', 938, 90], ['125', 1048, 90], ['55', 636, 168], ['90', 694, 168], ['20', 140, 295], ['120', 226, 294], ['30', 288, 294],
  ['30', 312, 294], ['30', 336, 294], ['30', 361, 294], ['30', 385, 294], ['30', 409, 294], ['300', 240, 323], ['280', 291, 377], ['220', 510, 376],
  ['200', 338, 193], ['90', 368, 446], ['90', 651, 429], ['260', 978, 484], ['50', 894, 507], ['90', 952, 507], ['230', 682, 572], ['30', 789, 572],
  ['90', 837, 572], ['20', 911, 562], ['20', 636, 488], ['90', 480, 554], ['212', 318, 655], ['10', 261, 628], ['80', 371, 764], ['10', 1072, 649],
  ['180', 478, 901], ['240', 646, 901], ['180', 818, 901], ['260', 996, 901],
]
const vLabels = [
  ['900', 52, 505], ['500', 84, 343], ['330', 84, 678], ['70', 84, 840], ['330', 113, 273], ['90', 113, 443], ['80', 113, 512], ['260', 193, 243],
  ['10', 236, 230], ['240', 438, 253], ['220', 305, 457], ['90', 460, 443], ['50', 460, 502], ['90', 562, 443], ['50', 562, 500], ['180', 1121, 213],
  ['140', 1121, 343], ['180', 1121, 500], ['400', 1121, 708], ['20', 268, 567], ['90', 460, 581], ['80', 434, 760], ['15', 434, 825], ['10', 298, 785],
  ['30', 376, 855], ['90', 937, 581], ['200', 898, 690], ['90', 843, 808], ['70', 942, 840], ['30', 909, 890], ['10', 980, 775],
]
const rooms = [['ANTRE', 508, 291], ['SALON', 770, 384], ['WC - LAVOBA', 240, 437], ['BALKON', 328, 603], ['OTURMA ODASI', 562, 703], ['BALKON', 986, 707]]
const planWalls =
  'M163 140H1100V545M163 140V545M188 157H1075M178 163V520M178 350H424M178 520V366H405V405H424V157M598 163V405H616V163M1085 163V520' +
  'M188 528H403M163 545H446V528H430M592 528H518V545H916V528H802M777 528H617M1075 528H988V545H1100M405 480H422V520M405 480V520M598 520V480H616V520' +
  'M234 545V812H405M241 545V804H405M405 545V727H422V545M405 845V792H422V845M430 853H865M405 869H891V545M875 545V845M1100 545V812H891M1093 545V804H891' +
  'M466 140V157M546 140V157M660 140V157M733 140V157M878 140V157M1000 140V157M1085 287H1100M1085 398H1100M550 853V869M745 853V869M875 610H891M875 772H891M163 408H178M163 480H178'
const columns = [[163, 140], [592, 140], [777, 140], [1075, 140], [163, 520], [405, 520], [592, 520], [777, 520], [1075, 520], [405, 845], [865, 845]]
const treads = 'M276 157V350M300 157V350M324 157V350M348 157V350M373 157V350M397 157V350'
</script>

<template>
  <div class="desktop">
    <div class="workspace">
      <section class="photos" aria-label="Photos">
        <header class="photo-bar">
          <button class="app-btn" aria-label="Gallery"><Icon name="gallery" size="12" /></button>
          <span class="photo-name">04-autocad-...</span>
          <div class="photo-tools">
            <button aria-label="Edit"><Icon name="editpic" size="13" /></button>
            <button aria-label="Rotate"><Icon name="rotpic" size="13" /></button>
            <button aria-label="Delete"><Icon name="trash" size="13" /></button>
            <button aria-label="Favourite" class="dim"><Icon name="heart" size="13" /></button>
            <button aria-label="More"><Icon name="dots" size="13" /></button>
          </div>
          <div class="photo-win">
            <button aria-label="Minimize" class="dim"><Icon name="min" size="11" /></button>
            <button aria-label="Maximize"><Icon name="max" size="11" /></button>
            <button aria-label="Close"><Icon name="close" size="11" /></button>
          </div>
        </header>
        <div class="photo-stage">
          <svg class="plan" viewBox="18 9 1158 936" role="img" aria-label="Floor plan">
            <rect x="18" y="9" width="1158" height="936" fill="#fff" />
            <rect x="25" y="15" width="1143" height="922" fill="none" stroke="#555" stroke-width="3" />
            <g fill="none" stroke="#222" stroke-width="2.200">
              <path :d="hPath" /><path :d="vPath" /><path :d="extensions" />
              <path d="M332 480A73 75 0 0 1 405 405M616 405A73 75 0 0 1 689 480V437M446 617A72 72 0 0 0 518 545V565M916 617A72 72 0 0 0 988 545V517" />
              <path d="M466 149H546M660 149H733M878 149H1000M550 861H745" stroke="#333" stroke-width="4" />
            </g>
            <g fill="#b5b5b5">
              <rect x="1087" y="163" width="12" height="124" /><rect x="1087" y="398" width="12" height="122" />
              <rect x="877" y="610" width="12" height="162" /><rect x="235" y="545" width="6" height="262" /><rect x="165" y="408" width="11" height="72" />
            </g>
            <g fill="none" stroke="#000" stroke-width="5">
              <path :d="planWalls" /><path :d="treads" />
              <rect x="252" y="250" width="172" height="7" fill="#fff" stroke-width="3" />
              <path d="M405 727Q348 732 340 792H405" />
              <path d="M368 171L410 178L368 186Z" fill="#000" stroke="none" />
              <circle cx="421" cy="271" r="5" fill="#000" stroke="none" />
              <rect v-for="(c, i) in columns" :key="i" :x="c[0]" :y="c[1]" width="25" height="24" fill="#fff" />
            </g>
            <g fill="none" stroke="#000" stroke-width="5">
              <rect x="194" y="376" width="15" height="43" /><rect x="209" y="387" width="11" height="22" /><ellipse cx="240" cy="398" rx="21" ry="18" />
              <circle cx="205" cy="487" r="20" stroke-width="6" /><circle cx="205" cy="487" r="11" /><circle cx="205" cy="487" r="2" />
            </g>
            <g transform="translate(588 0)" fill="none" stroke="#000" stroke-width="4.500">
              <rect x="67" y="205" width="75" height="150" />
              <path d="M85 205L88 187H120L124 205M85 355L88 373H120L124 355M67 233L48 236V266L67 270M67 290L48 293V324L67 327M142 233L161 236V266L142 270M142 290L161 293V324L142 327" />
              <path d="M76 207Q88 232 79 262T82 353M88 207Q78 240 92 262T90 353M98 207Q102 250 96 290T102 353M108 207Q112 260 106 300T110 353M118 207Q116 250 124 285T118 353M127 207Q134 250 127 300T130 353M72 228Q96 236 74 260" stroke-width="2" />
              <path d="M226 253V203Q312 163 400 203V253H386V212Q312 183 240 212V253ZM240 212H386M240 250H386M288 197V250M338 197V250" />
              <path d="M402 271H457Q487 332 457 393H402V381H445Q467 332 445 283H402ZM405 283V381M445 283V381M405 332H460" />
              <path d="M226 413V468Q312 508 400 468V413H386V458Q312 487 240 458V413ZM240 417H386M240 458H386M288 417V472M338 417V472" />
              <rect x="259" y="314" width="73" height="34" /><circle cx="296" cy="332" r="9" fill="#555" />
            </g>
            <g transform="translate(588 465)" fill="none" stroke="#000" stroke-width="4.500">
              <path d="M24 133H197V185H183V143H37V185H24ZM37 181H183M86 143V181M135 143V181" />
              <path d="M24 313V365H198V313H185V355H37V313ZM37 317H185M86 317V355M135 317V355" />
              <path d="M209 189H262V310H209V298H248V201H209ZM211 201V298M211 250H248" />
              <rect x="66" y="233" width="71" height="32" /><circle cx="101" cy="249" r="9" fill="#555" />
            </g>
            <g class="plan-num">
              <text v-for="(t, i) in hLabels" :key="'h' + i" :x="t[1]" :y="t[2] + 6">{{ t[0] }}</text>
              <text v-for="(t, i) in vLabels" :key="'v' + i" :transform="`translate(${t[1] + 6} ${t[2]}) rotate(-90)`">{{ t[0] }}</text>
            </g>
            <g class="plan-room">
              <text v-for="(t, i) in rooms" :key="i" :x="t[1]" :y="t[2] + 5">{{ t[0] }}</text>
            </g>
          </svg>
        </div>
        <footer class="photo-foot">
          <button aria-label="Filmstrip"><Icon name="film" /></button>
          <i class="vline"></i>
          <span class="zoom-pct">%85</span>
          <button aria-label="Zoom out" class="dim"><Icon name="zoomout" size="11" /></button>
          <button aria-label="Zoom in"><Icon name="zoomin" size="11" /></button>
          <button aria-label="Fit" class="dim"><Icon name="fit" /></button>
          <button aria-label="Actual size"><Icon name="one" /></button>
          <i class="vline"></i>
          <button aria-label="Full screen"><Icon name="full" /></button>
        </footer>
      </section>

      <section class="cad" aria-label="AutoCAD">
        <header class="title-bar">
          <button class="logo" aria-label="Application menu">A</button><i class="arr"></i>
          <button v-for="t in fileTools" :key="t" :aria-label="t"><Icon :name="t" /></button>
          <button aria-label="Undo"><Icon name="undo" /></button><i class="arr"></i>
          <button aria-label="Redo"><Icon name="redo" /></button><i class="arr"></i>
          <button class="layer-box quick" aria-label="Layer"><Icon name="bulb" size="10" /><Icon name="sun" size="10" /><Icon name="lock" size="10" /><Icon name="sq" size="10" /><span>0</span><i class="arr end"></i></button>
          <button aria-label="Render"><Icon name="tea" /></button><i class="arr"></i>
          <a class="share" href="#"><Icon name="plane" size="11" />Share</a>
          <h1 class="doc-name">Drawing1.dwg</h1>
          <i class="arr side"></i>
          <input v-model="keyword" class="keyword" type="text" aria-label="Search help" placeholder="Type a keyword or phrase" />
          <button aria-label="Search"><Icon name="mag" size="11" /></button>
          <button class="user"><Icon name="person" size="11" />oguzhanabdio...</button><i class="arr"></i>
          <button class="cart" aria-label="Store"><Icon name="cart" size="11" /></button>
          <button aria-label="Autodesk apps"><Icon name="adsk" size="11" /></button><i class="arr"></i>
          <i class="vline"></i>
          <button aria-label="Help"><Icon name="help" /></button><i class="arr"></i>
          <button aria-label="Assistant"><Icon name="assist" /></button>
          <div class="win-ctl">
            <button aria-label="Minimize"><Icon name="min" /></button>
            <button aria-label="Maximize"><Icon name="max" /></button>
            <button aria-label="Close"><Icon name="close" size="11" /></button>
          </div>
        </header>

        <nav class="menu-bar">
          <button v-for="m in menus" :key="m">{{ m }}</button>
          <div class="doc-ctl">
            <button aria-label="Minimize drawing"><Icon name="min" size="11" /></button>
            <button aria-label="Restore drawing"><Icon name="restore" size="11" /></button>
            <button aria-label="Close drawing"><Icon name="close" size="11" /></button>
          </div>
        </nav>

        <nav class="tab-bar">
          <button v-for="(t, i) in tabs" :key="t" :class="{ on: i === 0 }">{{ t }}</button>
          <button class="ribbon-toggle" aria-label="Ribbon display"><i></i></button><i class="arr"></i>
        </nav>

        <div class="ribbon">
          <section class="panel draw">
            <div class="tools">
              <button v-for="t in drawTools" :key="t.name" class="big" :class="t.cls"><Icon class="soft" :name="t.name" size="24" box="24" /><span>{{ t.label }}</span><i v-if="t.more" class="arr"></i></button>
              <div class="small-grid pair">
                <template v-for="n in ['rect', 'ellipse', 'hatch']" :key="n"><button :aria-label="n"><Icon class="soft" :name="n" size="12" /></button><i class="arr"></i></template>
              </div>
            </div>
            <button class="panel-name">Draw<i class="arr"></i></button>
          </section>
          <section class="panel modify">
            <div class="tools">
              <div class="small-grid five">
                <template v-for="(n, i) in modifyTools" :key="i"><i v-if="n === '>'" class="arr"></i><button v-else :aria-label="n"><Icon :name="n" /></button></template>
              </div>
            </div>
            <button class="panel-name">Modify<i class="arr"></i></button>
          </section>
          <section class="panel annotation">
            <div class="tools">
              <button class="big w30"><Icon name="text" size="24" box="24" /><span>Text</span><i class="arr"></i></button>
              <button class="big w40"><Icon class="soft" name="dim" size="24" box="24" /><span>Dimension</span></button>
              <div class="small-grid pair">
                <button aria-label="Linear"><Icon name="dimlin" size="12" /></button><i class="arr"></i>
                <button aria-label="Leader"><Icon name="leader" size="12" /></button><i class="arr"></i>
                <button aria-label="Table"><Icon class="soft" name="table" size="12" /></button>
              </div>
            </div>
            <button class="panel-name">Annotation<i class="arr"></i></button>
          </section>
          <section class="panel layers">
            <div class="tools">
              <button class="big w40"><Icon name="layprop" size="24" box="24" /><span>Layer<br />Properties</span></button>
              <div class="layer-side">
                <button class="layer-box" aria-label="Current layer"><Icon name="bulb" size="10" /><Icon name="sun" size="10" /><Icon name="lock" size="10" /><Icon name="sq" size="10" /><span>0</span><i class="arr end"></i></button>
                <div v-for="(row, r) in layerTools" :key="r" class="layer-row"><button v-for="n in row" :key="n" :aria-label="n"><Icon :name="n" size="12" /></button></div>
              </div>
            </div>
            <button class="panel-name">Layers<i class="arr"></i></button>
          </section>
          <section class="panel block">
            <div class="tools">
              <button class="big w28"><Icon name="insert" size="24" box="24" /><span>Insert</span><i class="arr"></i></button>
              <div class="small-grid pair tight">
                <button aria-label="Create"><Icon name="blk1" size="12" /></button><i></i>
                <button aria-label="Edit block"><Icon name="blk2" size="12" /></button><i></i>
                <button aria-label="Attributes"><Icon name="blk3" size="12" /></button><i class="arr"></i>
              </div>
            </div>
            <button class="panel-name">Block<i class="arr"></i></button>
          </section>
          <button v-for="c in collapsed" :key="c.name" class="folded"><Icon :name="c.name" size="23" box="24" /><span>{{ c.label }}</span><i class="arr"></i></button>
        </div>

        <nav class="doc-tabs">
          <button aria-label="Files" class="burger"><Icon name="burger" /></button>
          <i class="slash"></i>
          <button class="plain">Start</button>
          <button class="slant">Drawing1*<Icon name="close" size="8" /></button>
          <button aria-label="New drawing" class="add"><Icon name="plus" /></button>
          <i class="slash"></i>
        </nav>

        <main class="canvas">
          <svg class="model" width="100%" height="100%" aria-label="Model space">
            <defs>
              <pattern id="minor" x="-2" y="33" width="14.760" height="14.800" patternUnits="userSpaceOnUse"><path d="M.5 0V15M0 .5H15" stroke="#232c36" fill="none" /></pattern>
              <pattern id="major" x="71" y="33" width="73.800" height="73.900" patternUnits="userSpaceOnUse"><path d="M.5 0V74M0 .5H74" stroke="#2b343f" fill="none" /></pattern>
            </defs>
            <rect width="100%" height="100%" fill="url(#minor)" />
            <rect width="100%" height="100%" fill="url(#major)" />
            <g transform="translate(-2 162) scale(.33333)" fill="none">
              <path d="M117 286V642M194 464H294" stroke="#95159a" stroke-width="4" />
              <path d="M61 388V462M105 388V462M138 388V462M182 388V462M117 436H160M117 455H160M38 466V508" stroke="#17b436" stroke-width="3" stroke-dasharray="16 4" />
              <path d="M82 388V462M160 388V462M117 446H160M28 466V508" stroke="#1fb3bd" stroke-width="3" stroke-dasharray="12 4" />
              <path d="M4 430H17V436H4Z" stroke="#1fd08d" stroke-width="4" />
              <path d="M4 411L50 386H194V464H4M50 386V508A33 34 0 0 0 117 508V386M131 386V429M117 429H160V464M4 428H50M4 436H28A10 10 0 0 1 28 457H4M4 478H50M4 508H50" stroke="#c9ccd2" stroke-width="3" />
              <circle cx="83" cy="508" r="23" stroke="#c9ccd2" stroke-width="3" /><circle cx="10" cy="493" r="6" stroke="#c9ccd2" stroke-width="3" />
              <path :d="walls" stroke="#26488f" stroke-width="10" /><path :d="walls" stroke="#a9bdf2" stroke-width="4" />
              <rect v-for="(g, i) in grips" :key="i" :x="g[0] - 11" :y="g[1] - 11" width="22" height="22" fill="#1b80e8" />
            </g>
            <g fill="none" stroke="#dfe3e8">
              <path d="M226 389.500H255M261 389.500H290M257.500 357V387M257.500 393V422M255.500 387.500h5v5h-5z" />
              <path d="M258 391v11l2.500-2 2 4.500 2-1-2-4.500h3.500z" fill="#fff" stroke="none" />
              <path d="M12.500 484V515M15 517.500H46M9.500 514.500h6v6h-6zM13 472.500l4.500 5 4.500-5M17.500 477.500v5M48.500 508l9 9M57.500 508l-9 9" />
            </g>
          </svg>
          <span class="vp-label">[−][Top][2D Wireframe]</span>
          <input v-model="dynamicInput" class="dynamic" type="text" aria-label="Dynamic input" />
          <svg class="compass" viewBox="0 0 90 90" aria-label="View cube">
            <circle cx="45" cy="45" r="36" fill="none" stroke="#4b525b" stroke-width="8" />
            <rect x="28" y="28" width="34" height="34" fill="#bfc3c5" /><rect x="35" y="35" width="21" height="21" fill="#b2b6b8" />
            <g class="compass-dir"><text x="45" y="12">N</text><text x="45" y="87">S</text><text x="8" y="49">W</text><text x="82" y="49">E</text></g>
            <text class="compass-top" x="45" y="48">TOP</text>
          </svg>
          <button class="wcs">WCS</button>
          <div class="navbar">
            <svg viewBox="0 0 21 142" width="21" height="142" fill="none" stroke="#3f474f" aria-hidden="true">
              <circle cx="11" cy="20" r="7" /><circle cx="11" cy="20" r="3.500" /><path d="M17 15v10" />
              <path d="M6 50l-2-5q2-1 3 2l1-6q2-1 2 1l2-2 1 3 2-1v3l2 1q0 8-5 9H9z" />
              <path d="M3 61l12 12M13 61L4 73M3 61h3M13 61h3" /><circle cx="14" cy="69" r="3" /><path d="M16 71l3 4" />
              <path d="M4 95q7-4 14 0M11 86v17M8 89l3-3 3 3M8 100l3 3 3-3M5 92l-2 3 4 1" />
              <path d="M4 113h13v4H4zM8 113v4M13 113v4M4 119h10v9H4zM8 121v5l4-2.500z" /><path d="M10 33h2M10 80h2M10 105h2M17 4l2-1M17 138l2-2" />
            </svg>
          </div>
          <div class="command">
            <output class="history">Command: Specify opposite corner or [Fence/WPolygon/CPolygon]:</output>
            <div class="command-row">
              <i class="grab"></i>
              <button aria-label="Close command line"><Icon name="close" size="9" /></button>
              <button aria-label="Customize"><Icon name="wrench" size="11" /></button>
              <label class="command-box"><Icon name="prompt" /><i class="arr"></i><input v-model="command" type="text" aria-label="Command" placeholder="Type a command" /><i class="arr up"></i></label>
            </div>
          </div>
        </main>

        <footer class="status">
          <button aria-label="Layouts" class="burger"><Icon name="burger" /></button>
          <button class="slant">Model</button>
          <button class="plain">Layout1</button>
          <i class="slash"></i>
          <button class="plain">Layout2</button>
          <i class="slash"></i>
          <button aria-label="New layout" class="add"><Icon name="plus" /></button>
          <i class="slash"></i>
          <div class="toggles">
            <button class="space">MODEL</button>
            <template v-for="(s, i) in status" :key="i">
              <i v-if="s === '|'" class="gap"></i>
              <span v-else-if="s === '>'" class="drop"><i class="arr"></i></span>
              <button v-else-if="s === '1:1'" class="ratio">1:1</button>
              <button v-else class="tog" :class="{ on: s.endsWith('*') }" :aria-label="s"><Icon :name="s.replace('*', '')" /></button>
            </template>
          </div>
        </footer>
      </section>
    </div>

    <footer class="taskbar">
      <button class="start" aria-label="Start"><Icon name="win" size="13" /></button>
      <label class="search">
        <Icon name="magl" size="12" /><input v-model="taskSearch" type="text" placeholder="Ara" aria-label="Ara" />
        <svg class="elephants" viewBox="0 0 48 26" width="48" height="26" aria-hidden="true">
          <ellipse cx="25" cy="25" rx="24" ry="4" fill="#bccb4b" />
          <path d="M5 22V12Q3 5 8 4Q14 3 15 6Q18 8 19 3Q20 0 22 2Q21 4 21 5Q20 10 16 10L17 22H13V16L10 17V22Z" fill="#9b8981" />
          <path d="M19 18Q17 7 24 6Q28 4 31 7Q42 3 45 11L46 17 44 16V22H39V16L35 17V22H30V15L25 14Q22 14 22 18Z" fill="#a3928b" />
          <ellipse cx="10" cy="9" rx="3" ry="4" fill="#83726b" /><ellipse cx="29" cy="10" rx="3" ry="4" fill="#85746d" />
          <path d="M22 13Q20 15 18 13M15 9L18 11" stroke="#f5ecd9" fill="none" />
        </svg>
      </label>
      <button v-for="a in apps" :key="a.name" class="app" :class="{ run: a.run, active: a.active }" :aria-label="a.name"><Icon :name="a.name" :size="a.size || 16" /></button>
      <div class="tray">
        <button v-for="n in ['chev', 'meet', 'mic', 'net', 'vol']" :key="n" :aria-label="n"><Icon :name="n" size="11" /></button>
        <time class="clock">14:47<br />12.08.2024</time>
        <button aria-label="Notifications" class="chat"><Icon name="chat" /></button>
        <button aria-label="Copilot" class="copilot"><Icon name="copilot" size="15" /></button>
      </div>
    </footer>
  </div>
</template>

<style>
body { margin: 0; }
</style>

<style scoped>
.desktop {
  height: 100vh; display: flex; flex-direction: column; overflow: hidden;
  font: 8px/12px Roboto, "Open Sans", sans-serif; color: #dfe3e7;
  background: linear-gradient(180deg, #3b82cc 0%, #4a90cc 22%, #84bfd0 48%, #c5cdc2 62%, #6a8894 68%, #4f93b3 80%, #4b93b6 100%);
}
.desktop * { box-sizing: border-box; }
button { font: inherit; color: inherit; background: none; border: 0; padding: 0; margin: 0; display: flex; align-items: center; justify-content: center; flex: none; white-space: nowrap; }
input { font: inherit; color: inherit; border: 0; padding: 0; margin: 0; background: none; outline: 0; min-width: 0; }
svg { display: block; flex: none; }
.arr { flex: none; width: 4px; height: 3px; background: currentColor; clip-path: polygon(0 0, 100% 0, 50% 100%); }
.arr.up { clip-path: polygon(0 100%, 100% 100%, 50% 0); }
.arr.side { clip-path: polygon(0 0, 100% 50%, 0 100%); height: 4px; }
.arr.end { margin-left: auto; }
.dim { color: #777; }
.soft { color: #b9c4d2; }
.vline { width: 1px; height: 14px; background: #454545; flex: none; }
.slash { width: 1px; height: 11px; align-self: center; flex: none; background: #4a525e; transform: skewX(-24deg); }

.workspace { flex: 1; min-height: 0; display: grid; grid-template-columns: minmax(0, 396fr) minmax(0, 884fr); }

.photos { margin: 4px 4px 5px 6px; background: #1f1f1f; display: flex; flex-direction: column; min-width: 0; }
.photo-bar { display: flex; height: 32px; align-items: center; flex: none; }
.app-btn { width: 32px; height: 32px; background: #2b2b2b; }
.photo-name { margin-left: 12px; width: 88px; }
.photo-tools { display: flex; gap: 14px; }
.photo-win { display: flex; gap: 20px; margin-left: auto; margin-right: 10px; margin-bottom: 11px; }
.photo-stage { flex: 1; min-height: 0; display: flex; align-items: center; }
.plan { width: 100%; max-height: 100%; }
.plan-num text { font: 17px Roboto, sans-serif; text-anchor: middle; fill: #222; }
.plan-room text { font: 12px "Liberation Sans", sans-serif; text-anchor: middle; fill: #111; }
.photo-foot { display: flex; align-items: center; height: 27px; flex: none; background: #2b2b2b; padding: 0 8px 0 6px; gap: 15px; }
.photo-foot .vline { margin: 0 -6px; }
.zoom-pct { margin-left: auto; font-size: 10px; }

.cad { margin-right: 1px; border: solid #1c6fa8; border-width: 1px 2px 2px; border-left-color: #0d3d52; border-top-color: #2b7295; border-bottom-color: #15587a; background: #1f2730; display: flex; flex-direction: column; min-width: 0; }
.title-bar { height: 20px; flex: none; display: flex; align-items: center; gap: 4px; padding: 0 10px 0 6px; }
.logo { width: 16px; height: 15px; background: #e51050; color: #fff; font-weight: 700; font-size: 10px; border-radius: 1px; }
.layer-box { height: 13px; background: #3a4352; gap: 3px; padding: 0 2px; justify-content: flex-start; }
.quick { width: 118px; }
.share { display: flex; align-items: center; gap: 4px; color: #6cc0f5; text-decoration: none; margin-left: 2px; }
.doc-name { flex: 1; margin: 0; text-align: center; font-size: 8px; font-weight: 400; white-space: nowrap; }
.keyword { width: 118px; height: 13px; background: #475060; padding-left: 2px; }
.keyword::placeholder { color: #b5bbc4; font-style: italic; opacity: 1; }
.user { gap: 4px; }
.cart { margin-left: 3px; }
.title-bar .vline { background: #48505b; height: 12px; margin: 0 1px; }
.win-ctl { display: flex; gap: 18px; margin-left: 45px; }
.menu-bar { height: 16px; flex: none; display: flex; align-items: center; gap: 16px; padding: 0 8px; color: #b8bec6; border-bottom: 1px solid #333c48; }
.doc-ctl { display: flex; gap: 11px; margin-left: auto; color: #dfe3e7; }
.tab-bar { height: 15px; flex: none; display: flex; align-items: stretch; gap: 13px; padding-left: 2px; color: #b8bec6; background: #222a34; }
.tab-bar .on { background: #3d4454; color: #fff; padding: 0 6px 0 7px; margin-right: -6px; }
.tab-bar .arr { align-self: center; margin-left: -10px; }
.ribbon-toggle { margin-left: 2px; }
.ribbon-toggle i { width: 10px; height: 6px; background: linear-gradient(#222a34, #222a34) center / 3px 2px no-repeat, #e3e6ea; }

.ribbon { height: 65px; flex: none; display: flex; background: #3b4252; margin-right: 2px; }
.panel { display: flex; flex-direction: column; border-right: 1px solid #282f3b; padding-top: 3px; flex: none; background: #3c4353; }
.tools { display: flex; flex: 1; align-items: flex-start; }
.draw { width: 150px; }
.draw .tools { padding-left: 1px; }
.modify { width: 89px; }
.annotation { width: 99px; }
.layers { width: 181px; }
.block { width: 55px; border-right: 2px solid #272e3a; }
.panel-name { align-self: center; height: 14px; gap: 5px; }
.panel-name .arr, .folded .arr { width: 5px; }
.big { flex-direction: column; justify-content: flex-start; line-height: 10px; }
.big span { margin-top: 1px; text-align: center; }
.big .arr { margin-top: 2px; }
.w28 { width: 28px; }
.w30 { width: 30px; }
.w34 { width: 34px; }
.w40 { width: 40px; }
.small-grid { display: grid; grid-auto-rows: 16px; align-items: center; justify-items: center; }
.pair { grid-template-columns: 18px 6px; }
.tight { grid-template-columns: 16px 6px; }
.five { grid-template-columns: 20px 20px 18px 8px 22px; }
.layer-side { flex: 1; padding: 1px 2px 0 1px; }
.layer-side .layer-box { width: 100%; padding-left: 4px; background: #4a5365; margin-bottom: 2px; }
.layer-row { display: grid; grid-template-columns: repeat(5, 16px); height: 16px; align-items: center; justify-items: center; }
.folded { width: 41px; border-right: 2px solid #272e3a; background: #4a5468; flex-direction: column; justify-content: flex-start; padding: 3px 0 4px; }
.folded .arr { margin-top: auto; }

.doc-tabs { height: 21px; flex: none; display: flex; align-items: stretch; gap: 8px; padding-left: 9px; border-bottom: 2px solid #3d4454; }
.slant { position: relative; z-index: 0; color: #fff; font-weight: 700; padding: 0 8px; gap: 5px; }
.slant::before { content: ""; position: absolute; inset: 0; z-index: -1; background: #3d4454; transform: skewX(-18deg); }
.doc-tabs .slant { margin-top: 1px; }

.canvas { flex: 1; min-height: 0; position: relative; overflow: hidden; background: #202831; }
.model { position: absolute; inset: 0; }
.vp-label { position: absolute; left: 2px; top: 3px; }
.dynamic { position: absolute; left: 269px; top: 401px; width: 27px; height: 13px; background: #fff; color: #222; padding-left: 2px; font-size: 9px; border: 1px solid #8b8f94; }
.compass { position: absolute; right: 12px; top: 10px; width: 90px; height: 90px; overflow: visible; }
.compass-dir text { font: 700 12px "Liberation Sans", sans-serif; fill: #c5c9cd; text-anchor: middle; }
.compass-top { font: 700 8px "Liberation Sans", sans-serif; fill: #404850; text-anchor: middle; }
.wcs { position: absolute; right: 40px; top: 113px; width: 32px; height: 11px; background: #98a0a8; color: #343c46; border-radius: 3px; justify-content: flex-start; padding-left: 3px; }
.navbar { position: absolute; right: 4px; top: 141px; background: #5c646b; border-radius: 2px; }
.command { position: absolute; left: 50%; bottom: 0; width: 58.5%; transform: translateX(-50%); }
.history { display: block; width: max-content; margin: 0 0 2px 41px; background: #4e555b; color: #d3d7da; line-height: 11px; padding: 0 1px; }
.history, .command-box input { font-family: "Liberation Mono", monospace; font-size: 8px; }
.command-row { display: flex; align-items: center; gap: 5px; height: 17px; background: #2a323c; padding-left: 2px; }
.grab { width: 3px; height: 11px; border: solid #98a0a8; border-width: 0 1px; }
.command-box { flex: 1; align-self: stretch; display: flex; align-items: center; gap: 3px; background: #bec1c4; color: #41474d; padding: 0 3px 0 2px; }
.command-box input { flex: 1; }
.command-box input::placeholder { color: #5b6065; font-style: italic; opacity: 1; }

.status { height: 23px; flex: none; display: flex; align-items: stretch; gap: 7px; border-top: 2px solid #3d4454; padding: 0 3px 2px 9px; }
.status .burger { margin-right: 3px; }
.toggles { display: flex; align-items: center; margin-left: auto; }
.toggles > * { height: 15px; }
.space { background: #3a4251; width: 30px; margin-right: 3px; }
.tog { width: 16px; background: #363e4c; }
.tog.on { background: #5f94cb; color: #fff; }
.drop { width: 11px; display: flex; align-items: center; justify-content: center; background: #2d3541; }
.ratio { width: 15px; background: #2d3541; }
.gap { width: 2px; }

.taskbar { height: 27px; flex: none; display: flex; align-items: stretch; color: #fff; background: linear-gradient(90deg, #20343c 0%, #24363c 42%, #2a2f30 70%, #22292d 100%); }
.start { width: 32px; }
.search { width: 192px; background: #f2f2f2; color: #333; display: flex; align-items: center; padding: 0 2px 0 8px; gap: 7px; font-size: 11px; }
.search input { flex: 1; }
.search input::placeholder { color: #444; opacity: 1; }
.elephants { align-self: flex-end; }
.app { width: 33px; border-bottom: 2px solid transparent; position: relative; }
.app.run::after { content: ""; position: absolute; left: 3px; right: 3px; bottom: -2px; height: 2px; background: #76b9ed; }
.app.active { background: #4b5a60; }
.app.active::after { left: 0; right: 0; }
.tray { margin-left: auto; display: flex; align-items: center; gap: 5px; padding-right: 14px; }
.clock { text-align: center; margin: 0 2px; }
.chat { margin-right: 8px; }
</style>
